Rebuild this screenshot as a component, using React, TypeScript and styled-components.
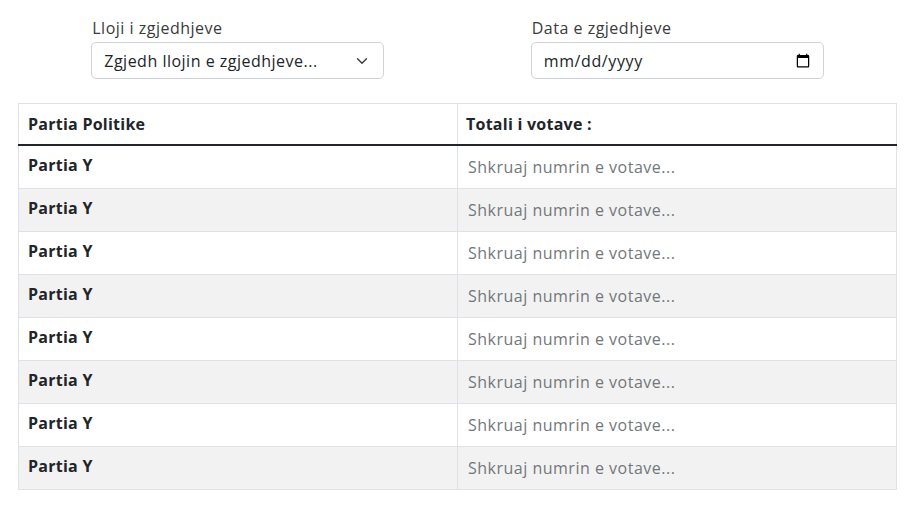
import React from "react";
import styled, { createGlobalStyle } from "styled-components";

const GlobalStyle = createGlobalStyle`
  * { box-sizing: border-box; }
  body {
    margin: 0;
    background: #fff;
    font-family: "Open Sans", "Liberation Sans", sans-serif;
    font-size: 16px;
    line-height: 24px;
    color: #212529;
  }
`;

const Page = styled.div`
  padding: 16px 19px 20px 18px;
  letter-spacing: 0.5px;
`;

const Filters = styled.div`
  display: grid;
  grid-template-columns: 1fr 1fr;
`;

const Field = styled.div`
  width: 293px;
  margin: 0 auto;
  display: flex;
  flex-direction: column;
`;

const Label = styled.label`
  font-size: 16px;
  line-height: 24px;
  color: #3b3b3b;
  margin-bottom: 2px;
  padding-left: 1px;
`;

const SelectWrap = styled.div`
  position: relative;
`;

const baseControl = `
  width: 100%;
  height: 37px;
  border: 1px solid #ced4da;
  border-radius: 5px;
  background: #fff;
  font-family: "Open Sans", "Liberation Sans", sans-serif;
  font-size: 16px;
  letter-spacing: 0.5px;
  color: #212529;
  padding: 0 12px;
  outline: none;
`;

const Select = styled.select`
  ${baseControl}
  appearance: none;
  -webkit-appearance: none;
`;

const Chevron = styled.svg`
  position: absolute;
  right: 16px;
  top: 13px;
  width: 12px;
  height: 12px;
  pointer-events: none;
`;

const DateInput = styled.input`
  ${baseControl}
  &::-webkit-datetime-edit {
    letter-spacing: 0.6px;
  }
  &::-webkit-datetime-edit-fields-wrapper {
    padding: 0;
  }
  &::-webkit-datetime-edit-month-field,
  &::-webkit-datetime-edit-day-field,
  &::-webkit-datetime-edit-year-field,
  &::-webkit-datetime-edit-text {
    padding: 0;
  }
  &::-webkit-calendar-picker-indicator {
    margin-right: -2px;
  }
`;

const Table = styled.table`
  margin-top: 24px;
  width: 100%;
  border-collapse: collapse;
  table-layout: fixed;
  border: 1px solid #dee2e6;
`;

const HeadCell = styled.th<{ $first?: boolean }>`
  text-align: left;
  font-weight: 700;
  font-size: 16px;
  line-height: 24px;
  letter-spacing: 0.25px;
  color: #212529;
  padding: 8px 8px 8px ${(p) => (p.$first ? "9px" : "8px")};
  border-left: 1px solid #dee2e6;
  border-bottom: 2px solid #212529;
`;

const Row = styled.tr<{ $striped: boolean }>`
  background: ${(p) => (p.$striped ? "#f2f2f2" : "#fff")};
  border-bottom: 1px solid #dee2e6;
`;

const NameCell = styled.td`
  height: 42px;
  padding: 7px 8px 11px 9px;
  vertical-align: top;
  font-weight: 700;
  letter-spacing: 0.25px;
  color: #212529;
  border-left: 1px solid #dee2e6;
`;

const VoteCell = styled.td`
  height: 42px;
  padding: 0;
  border-left: 1px solid #dee2e6;
`;

const VoteInput = styled.input`
  width: 100%;
  height: 41px;
  border: none;
  background: transparent;
  padding: 0 10px;
  font-family: "Open Sans", "Liberation Sans", sans-serif;
  font-size: 16px;
  letter-spacing: 0.5px;
  color: #212529;
  outline: none;
  &::placeholder {
    color: #73777b;
  }
`;

const rows = Array.from({ length: 8 }, (_, i) => i);

export default function App() {
  return (
    <>
      <GlobalStyle />
      <Page>
        <Filters>
          <Field>
            <Label>Lloji i zgjedhjeve</Label>
            <SelectWrap>
              <Select defaultValue="">
                <option value="">Zgjedh llojin e zgjedhjeve...</option>
              </Select>
              <Chevron viewBox="0 0 16 16" fill="none">
                <path
                  d="M2 5l6 6 6-6"
                  stroke="#343a40"
                  strokeWidth="1.8"
                  strokeLinecap="round"
                  strokeLinejoin="round"
                />
              </Chevron>
            </SelectWrap>
          </Field>
          <Field>
            <Label>Data e zgjedhjeve</Label>
            <DateInput type="date" />
          </Field>
        </Filters>
        <Table>
          <thead>
            <tr>
              <HeadCell $first>Partia Politike</HeadCell>
              <HeadCell>Totali i votave :</HeadCell>
            </tr>
          </thead>
          <tbody>
            {rows.map((i) => (
              <Row key={i} $striped={i % 2 === 1}>
                <NameCell>Partia Y</NameCell>
                <VoteCell>
                  <VoteInput type="text" placeholder="Shkruaj numrin e votave..." />
                </VoteCell>
              </Row>
            ))}
          </tbody>
        </Table>
      </Page>
    </>
  );
}
